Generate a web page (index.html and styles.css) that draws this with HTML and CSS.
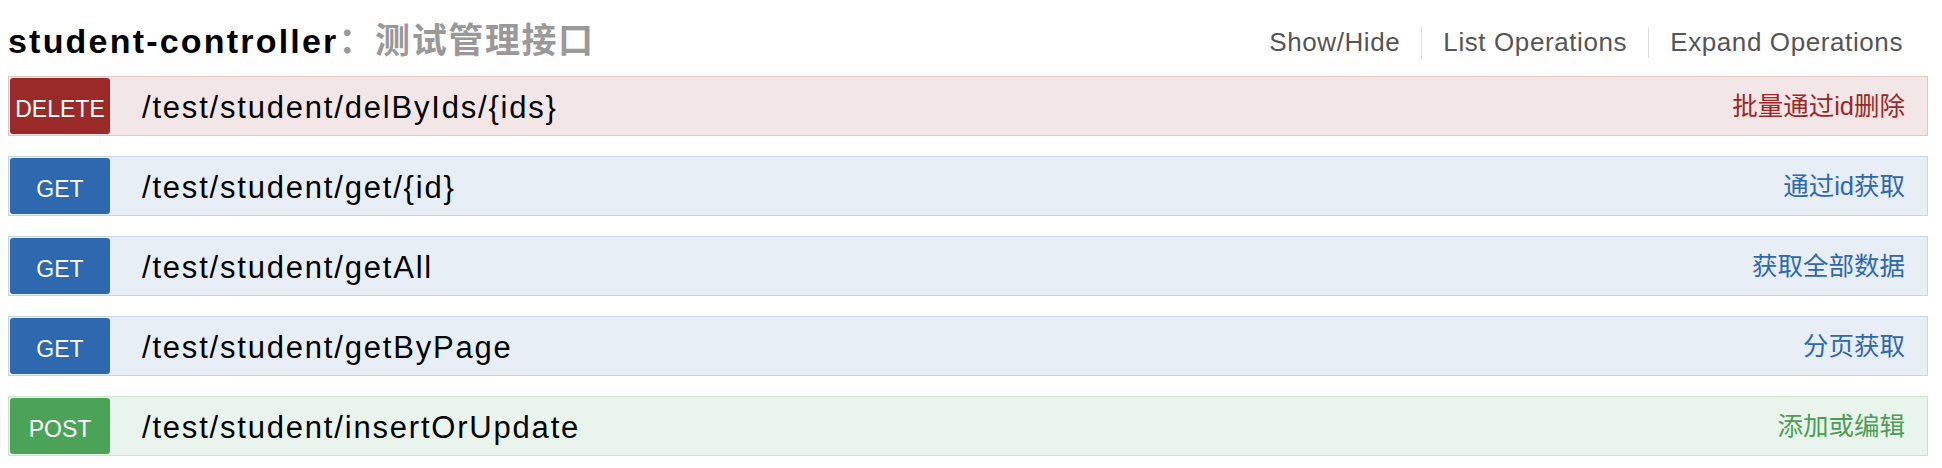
FILE: index.html
```html
<!DOCTYPE html>
<html lang="zh-CN">
<head>
<meta charset="utf-8">
<title>student-controller</title>
<link rel="stylesheet" href="styles.css">
</head>
<body>
<div class="resource">
  <div class="heading">
    <h2 class="title"><span class="name">student-controller</span><span class="title-desc"><span class="colon">：</span>测试管理接口</span></h2>
    <ul class="options">
      <li>Show/Hide</li>
      <li>List Operations</li>
      <li>Expand Operations</li>
    </ul>
  </div>
  <ul class="endpoints">
    <li class="op op-delete">
      <span class="method">DELETE</span>
      <span class="path">/test/student/delByIds/{ids}</span>
      <span class="summary">批量通过id删除</span>
    </li>
    <li class="op op-get">
      <span class="method">GET</span>
      <span class="path">/test/student/get/{id}</span>
      <span class="summary">通过id获取</span>
    </li>
    <li class="op op-get">
      <span class="method">GET</span>
      <span class="path">/test/student/getAll</span>
      <span class="summary">获取全部数据</span>
    </li>
    <li class="op op-get">
      <span class="method">GET</span>
      <span class="path">/test/student/getByPage</span>
      <span class="summary">分页获取</span>
    </li>
    <li class="op op-post">
      <span class="method">POST</span>
      <span class="path">/test/student/insertOrUpdate</span>
      <span class="summary">添加或编辑</span>
    </li>
  </ul>
</div>
</body>
</html>
```

FILE: styles.css
```css
* {
  box-sizing: border-box;
}

html, body {
  margin: 0;
  padding: 0;
  background: #ffffff;
}

body {
  font-family: "Liberation Sans", "Noto Sans CJK SC", sans-serif;
  color: #000;
}

.resource {
  padding: 0 14px 0 8px;
}

.heading {
  display: flex;
  justify-content: space-between;
  align-items: flex-start;
  height: 76px;
}

.title {
  margin: 0;
  padding-top: 18px;
  font-size: 34px;
  line-height: 40px;
  font-weight: 700;
  letter-spacing: 2.2px;
  white-space: nowrap;
}

.name {
  color: #000;
}

.title-desc {
  color: #999999;
  font-size: 35px;
  letter-spacing: 1.6px;
  font-family: "Liberation Sans", "Noto Sans CJK SC", sans-serif;
}

.colon {
  font-family: "Noto Sans CJK TC", "Noto Sans CJK SC", sans-serif;
  font-weight: 700;
}

.options {
  display: flex;
  list-style: none;
  margin: 0;
  padding: 27px 25px 0 0;
  font-size: 26px;
  line-height: 31px;
  letter-spacing: 0.6px;
  color: #555555;
}

.options li {
  padding: 0 21px;
}

.options li + li {
  border-left: 1px solid #dddddd;
}

.options li:last-child {
  padding-right: 0;
}

.endpoints {
  list-style: none;
  margin: 0;
  padding: 0;
  display: flex;
  flex-direction: column;
  gap: 20px;
}

.op {
  display: flex;
  align-items: center;
  height: 60px;
  border: 1px solid;
  padding: 1px;
}

.method {
  flex: 0 0 100px;
  height: 56px;
  display: flex;
  align-items: center;
  justify-content: center;
  padding-top: 6px;
  border-radius: 3px;
  color: #ffffff;
  font-size: 23px;
  line-height: 23px;
}

.path {
  flex: 1;
  margin-left: 32px;
  padding-top: 4px;
  font-size: 31px;
  line-height: 36px;
  letter-spacing: 1.8px;
  color: #000;
  white-space: nowrap;
}

.summary {
  padding-right: 21px;
  font-size: 25.5px;
  line-height: 30px;
  white-space: nowrap;
}

.op-delete {
  background: #f2e6e6;
  border-color: #e2c4c5;
}
.op-delete .method {
  background: #9a2a28;
}
.op-delete .summary {
  color: #9b2828;
}

.op-get {
  background: #e7eef6;
  border-color: #c5d6e8;
}
.op-get .method {
  background: #2e68ae;
}
.op-get .summary {
  color: #2e68ae;
}

.op-post {
  background: #e9f4ec;
  border-color: #c9e5d2;
}
.op-post .method {
  background: #4ba358;
}
.op-post .summary {
  color: #4b9e55;
}
```
